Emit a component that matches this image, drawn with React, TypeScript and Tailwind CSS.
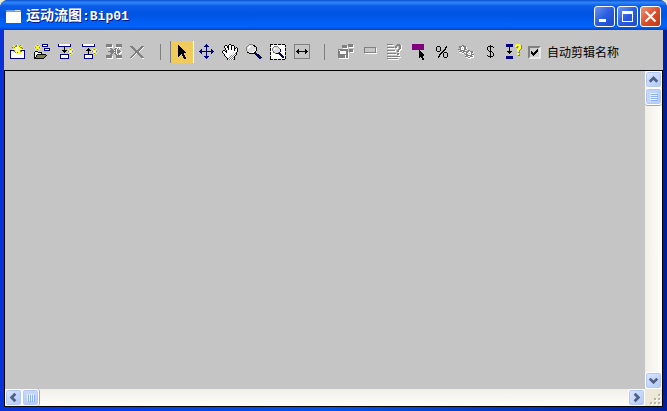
import { useState } from 'react';

// one character per pixel, '.' is transparent
const COLORS: Record<string, string> = {
  k: '#000000',
  w: '#ffffff',
  n: '#000080',
  y: '#ffff20',
  l: '#ffffa0',
  o: '#808040',
  g: '#808080',
  s: '#dcdcdc',
  p: '#800080',
};

const ICONS: Record<string, string[]> = {
  create: [
    '.......y........',
    '...y..oy..o.y...',
    '....yogyyoyy....',
    '..o.oylwlygo....',
    '....ylwylwy.o...',
    '..yyylwlylyyyy..',
    'nnnngylwlyonnnn.',
    'nww.oywylwgowwn.',
    'nwwywoyoywywwwn.',
    'nwwwwwwywwwwwwn.',
    'nwwwwwwwwwwwwwn.',
    'nwwwwwwwwwwwwwn.',
    'nwwwwwwwwwwwwwn.',
    'nwwwwwwwwwwwwwn.',
    'nnnnnnnnnnnnnnn.',
    '................',
  ],
  createMany: [
    '...y....nnnnnn..',
    '.y.o.y..nwwwwn..',
    '..yly...nnnnnn..',
    'yoylyoy.........',
    '..yly.....nnnnnn',
    '.y.o.y....nwwwwn',
    '...y......nnnnnn',
    '.kkk............',
    'kwwwkkkk........',
    'kwwwwwwk........',
    'kwwkkkkkkkkk....',
    'kwkoooooooook...',
    'kwkooooooook....',
    'kkooooooook.....',
    'kkkkkkkkkk......',
    '................',
  ],
  transitionTo: [
    'nwwwwwwwwwwwn...',
    'nwwwwwwwwwwwn...',
    'nnnnnnnnnnnnn...',
    '......k.........',
    '......k.....y...',
    '......k...y.o.y.',
    '....kkkkk..yly..',
    '.....kkk.yoylyoy',
    '......k....yly..',
    '..........y.o.y.',
    '..nnnnnnnnn.y...',
    '..nwwwwwwwn.....',
    '..nwwwwwwwn.....',
    '..nwwwwwwwn.....',
    '..nnnnnnnnn.....',
    '................',
  ],
  transitionFrom: [
    'nwwwwwwwwwwwn...',
    'nwwwwwwwwwwwn...',
    'nnnnnnnnnnnnn...',
    '................',
    '......k.....y...',
    '.....kkk..y.o.y.',
    '....kkkkk..yly..',
    '......k..yoylyoy',
    '......k....yly..',
    '......k...y.o.y.',
    '..nnnnnnnnn.y...',
    '..nwwwwwwwn.....',
    '..nwwwwwwwn.....',
    '..nwwwwwwwn.....',
    '..nnnnnnnnn.....',
    '................',
  ],
  optimize: [
    'gggggg....gggggg',
    'ggggggw...gggggg',
    'ggggggw...gggggg',
    '.wwwwww..wwwwww.',
    '....gg...ggwgw..',
    '.....gg.ggwg....',
    '....ggggwgwggg..',
    '..ggggggggwggggw',
    '....ggggwgwgggww',
    '.....gg.ggwg.ww.',
    '....gg...ggwgw..',
    'gggggg....gggggg',
    'ggggggw...gggggg',
    'ggggggw...gggggg',
    '.wwwwww....wwwww',
    '................',
  ],
  remove: [
    '................',
    '................',
    'ggg........ggg..',
    '.ggg......gggw..',
    '..ggg....gggw...',
    '...ggg..gggw....',
    '....ggggggw.....',
    '.....ggggw......',
    '.....gggg.......',
    '....ggwggg......',
    '...ggw..ggg.....',
    '..ggw....ggg....',
    '.ggw......ggg...',
    'ggw........ggg..',
    '.w..........ww..',
    '................',
  ],
  select: [
    '................',
    '....k...........',
    '....kk..........',
    '....kkk.........',
    '....kkkk........',
    '....kkkkk.......',
    '....kkkkkk......',
    '....kkkkkkk.....',
    '....kkkkkkkk....',
    '....kkkkkk......',
    '....kkk.kk......',
    '....kk..kkk.....',
    '....k....kk.....',
    '.........kkk....',
    '..........kk....',
    '................',
  ],
  move: [
    '........n.......',
    '.......nnn......',
    '......nnnnn.....',
    '........n.......',
    '........n.......',
    '...n....n....n..',
    '..nn....n....nn.',
    '.nnnnnnnnnnnnnnn',
    '..nn....n....nn.',
    '...n....n....n..',
    '........n.......',
    '........n.......',
    '......nnnnn.....',
    '.......nnn......',
    '........n.......',
    '................',
  ],
  pan: [
    '.......kk.......',
    '...kk.kwwkkk....',
    '..kwwkkwwkwwk...',
    '..kwwkkwwkwwk.k.',
    '...kwwkwwkwwkkwk',
    '...kwwkwwkwwkwwk',
    '.kk.kwwwwwwwkwwk',
    'kwwkkwwwwwwwwwwk',
    'kwwwkwwwwwwswsk.',
    '.kwwwwwwswswwgk.',
    '..kwwwwwswswgwk.',
    '..kwwwwswgwgwk..',
    '...kwwwwgwgwk...',
    '....kwwgwgwgk...',
    '.....kgwgwgwk...',
    '.....kwgwgwgk...',
  ],
  zoom: [
    '...gggg.........',
    '..gsssskk.......',
    '.gswwssskk......',
    'gswwssssssk.....',
    'gswsssssssk.....',
    'gsssssssswk.....',
    'gsssssssswk.....',
    '.gssssswwk......',
    '.kksswwwkk......',
    '...kkkkkknk.....',
    '.........nnnk...',
    '..........nnnk..',
    '...........nnnk.',
    '............nnnk',
    '.............nn.',
    '................',
  ],
  zoomRegion: [
    'kkk.kkk.kkk.kkk.',
    'kwwwwwwwwwwwwwwk',
    'kwwwggggwwwwwwwk',
    '.wwgssssgwwwwww.',
    'kwgswwsssgwwwwwk',
    'kwgswsssssnwwwwk',
    'kwgsssssssnwwwwk',
    '.wwgssssssnwwww.',
    'kwwggsssgnwwwwwk',
    'kwwwwgnnnnnwwwwk',
    'kwwwwwwwwnnnwwwk',
    '.wwwwwwwwwnnnww.',
    'kwwwwwwwwwwnnnwk',
    'kwwwwwwwwwwwnnwk',
    'kwwwwwwwwwwwwwwk',
    'kkk.kkk.kkk.kkk.',
  ],
  fit: [
    'gggggggggggggggg',
    'g..............g',
    'g..............g',
    'g..............g',
    'g..............g',
    'g...k......k...g',
    'g..kk......kk..g',
    'g.kknnnnnnnnkk.g',
    'g..kk......kk..g',
    'g...k......k...g',
    'g..............g',
    'g..............g',
    'g..............g',
    'g..............g',
    'gggggggggggggggg',
    '................',
  ],
  save: [
    '..........ggggg.',
    '....ggggg.gggggw',
    '....gggggwgggggw',
    '....gggggw.wwwww',
    '.....wwwww......',
    'gggggggggg.gggg.',
    'gwgggggggg.ggggw',
    'ggwwwwwwgg.ggggw',
    'ggwwwwwwggw.wwww',
    'ggwwwwwwggw.....',
    'ggggggggggw.....',
    'gggggggwggw.....',
    'gggggggwggw.....',
    'gggggggwggw.....',
    '.wwwwwwwwww.....',
    '................',
  ],
  clip: [
    '................',
    '................',
    '................',
    '..gggggggggggg..',
    '..g..........gw.',
    '..g..........gw.',
    '..g..........gw.',
    '..g..........gw.',
    '..gggggggggggg..',
    '...wwwwwwwwwwww.',
    '................',
    '................',
    '................',
    '................',
    '................',
    '................',
  ],
  help: [
    '.gggggg....ggg..',
    '..wwwwww..gggggw',
    '.........gg..ggw',
    '.ggggggg.ggw.ggw',
    '..wwwwwww.ww.ggw',
    '............ggww',
    '.ggggggggw.ggww.',
    '..wwwwwwww.ggw..',
    '............ww..',
    '.ggggggggg.gg...',
    '..wwwwwwwwwggw..',
    '............ww..',
    '.ggggggggggggg..',
    '..wwwwwwwwwwwww.',
    '.ggggggggggg....',
    '..wwwwwwwwwww...',
  ],
  clipMode: [
    '..pppppppppppp..',
    '..pppppppppppp..',
    '..pppppppppppp..',
    '..pppppppppppp..',
    '..pppppppppppp..',
    '..pppppppppppp..',
    '.........k......',
    '.........kk.....',
    '.........kkk....',
    '.........kkkk...',
    '.........kkkkk..',
    '.........kkkkk..',
    '.........kkkk...',
    '.........k.kk...',
    '............kk..',
    '............kk..',
  ],
  percent: [
    '................',
    '................',
    '...kkk......k...',
    '..k...k....kk...',
    '..k...k....k....',
    '..k...k...kk....',
    '..k...k..kk.....',
    '...kkk..kk......',
    '.......kk.kkk...',
    '......kk.k...k..',
    '.....kk..k...k..',
    '.....k...k...k..',
    '....kk...k...k..',
    '....k.....kkk...',
    '................',
    '................',
  ],
  gears: [
    '................',
    '....gg..........',
    '.gggwggg........',
    '.ggwwwggw.......',
    '..gw.wggw.......',
    'gggwwwgggw......',
    '.wgggggww.gg....',
    '.gggwggggggwggg.',
    '.wwwggwwggwwwggw',
    '....wwg.gw..wgw.',
    '.......gggwwwggg',
    '.......wggggggww',
    '.......gggwwgggw',
    '........wwggwwww',
    '..........www...',
    '................',
  ],
  dollar: [
    '................',
    '........k.......',
    '......kkkkk.....',
    '.....k..k..k....',
    '.....k..k.......',
    '.....k..k.......',
    '......k.k.......',
    '.......kkk......',
    '........k.k.....',
    '........k..k....',
    '........k..k....',
    '.....k..k..k....',
    '......kkkkk.....',
    '........k.......',
    '................',
    '................',
  ],
  track: [
    'nnnnnnn...yyyy..',
    'nnnnnnn..yyyyyyg',
    'nnnnnnn..yyg.yyg',
    '...k......gg.yyg',
    '...k........yyyg',
    '...k.......yyyg.',
    '...k.......yyg..',
    '.kkkkk.....yyg..',
    '..kkk.......gg..',
    '...k.......yy...',
    '...........yyg..',
    '............gg..',
    'nnnnnnn.........',
    'nnnnnnn.........',
    'nnnnnnn.........',
    '................',
  ],
};

const Icon = ({ name }: { name: string }) => (
  <svg width="16" height="16" viewBox="0 0 16 16" shapeRendering="crispEdges" aria-hidden="true">
    {ICONS[name].map((row, y) =>
      row.split('').map((c, x) =>
        c === '.' ? null : <rect key={`${x}-${y}`} x={x} y={y} width="1" height="1" fill={COLORS[c]} />
      )
    )}
  </svg>
);

interface Tool {
  icon: string;
  label: string;
}

const editTools: Tool[] = [
  { icon: 'create', label: '创建剪辑' },
  { icon: 'createMany', label: '创建多个剪辑' },
  { icon: 'transitionTo', label: '创建到选定项的变换' },
  { icon: 'transitionFrom', label: '创建来自选定项的变换' },
  { icon: 'optimize', label: '优化选定变换' },
  { icon: 'remove', label: '删除' },
];

const viewTools: Tool[] = [
  { icon: 'select', label: '选择' },
  { icon: 'move', label: '移动剪辑' },
  { icon: 'pan', label: '平移' },
  { icon: 'zoom', label: '缩放' },
  { icon: 'zoomRegion', label: '缩放区域' },
  { icon: 'fit', label: '最大化显示' },
];

const clipTools: Tool[] = [
  { icon: 'save', label: '保存' },
  { icon: 'clip', label: '剪辑' },
  { icon: 'help', label: '检查' },
  { icon: 'clipMode', label: '剪辑模式' },
  { icon: 'percent', label: '随机百分比' },
  { icon: 'gears', label: '设置' },
  { icon: 'dollar', label: '成本' },
  { icon: 'track', label: '显示变换' },
];

const Separator = () => (
  <div className="flex h-6 w-5 items-center pl-2.5">
    <div className="h-4 w-px bg-[#808080]" />
  </div>
);

const ToolButton = ({ tool, active, onClick }: { tool: Tool; active?: boolean; onClick?: () => void }) => (
  <button
    type="button"
    aria-label={tool.label}
    aria-pressed={active}
    onClick={onClick}
    className={`flex h-[22px] w-6 items-center justify-center ${
      active ? 'border-l border-r border-l-[#808080] border-r-white bg-[#f0cb5c]' : ''
    }`}
  >
    <Icon name={tool.icon} />
  </button>
);

const arrows = {
  up: 'M4 10.5 8 6.5 12 10.5',
  down: 'M4 6 8 10 12 6',
  left: 'M10 4 6 8 10 12',
  right: 'M6 4 10 8 6 12',
};

const ScrollButton = ({ dir, label }: { dir: keyof typeof arrows; label: string }) => (
  <button
    type="button"
    aria-label={label}
    className="flex h-[17px] w-[17px] shrink-0 items-center justify-center rounded-[3px] border border-white bg-linear-to-br from-[#dce6ff] to-[#b2c8f8] shadow-[inset_0_0_0_1px_#b4c8f6]"
  >
    <svg width="15" height="15" viewBox="0 0 16 16" fill="none" stroke="#4d6185" strokeWidth="3">
      <path d={arrows[dir]} />
    </svg>
  </button>
);

const FlowCanvas = () => (
  <div className="grid min-h-0 flex-1 grid-cols-[1fr_17px] grid-rows-[1fr_17px] border border-black bg-[#c5c5c5]">
    <main className="min-h-0" />
    <div className="flex flex-col justify-between bg-linear-to-r from-[#f0efe8] to-[#fefefb]">
      <div>
        <ScrollButton dir="up" label="向上滚动" />
        <div className="flex h-[17px] w-[17px] flex-col items-center justify-center gap-px rounded-[3px] border border-white bg-linear-to-r from-[#c9d8fc] to-[#b8cbf9] shadow-[inset_0_0_0_1px_#b4c8f6,0_1px_0_#91a9dc]">
          {[0, 1, 2, 3].map((i) => (
            <div key={i} className="h-px w-[7px] bg-[#eef4fe] shadow-[1px_1px_0_#8cb0f8]" />
          ))}
        </div>
      </div>
      <ScrollButton dir="down" label="向下滚动" />
    </div>
    <div className="flex justify-between bg-linear-to-b from-[#f0efe8] to-[#fefefb]">
      <div className="flex">
        <ScrollButton dir="left" label="向左滚动" />
        <div className="flex h-[17px] w-[17px] items-center justify-center gap-px rounded-[3px] border border-white bg-linear-to-b from-[#c9d8fc] to-[#b8cbf9] shadow-[inset_0_0_0_1px_#b4c8f6,1px_0_0_#91a9dc]">
          {[0, 1, 2, 3].map((i) => (
            <div key={i} className="h-[7px] w-px bg-[#eef4fe] shadow-[1px_1px_0_#8cb0f8]" />
          ))}
        </div>
      </div>
      <ScrollButton dir="right" label="向右滚动" />
    </div>
    <div className="flex items-end justify-end bg-[#ece9d8]">
      <svg width="14" height="14" viewBox="0 0 14 14" shapeRendering="crispEdges" aria-hidden="true">
        {[[10, 2], [6, 6], [10, 6], [2, 10], [6, 10], [10, 10]].map(([x, y]) => (
          <g key={`${x}-${y}`}>
            <rect x={x + 1} y={y + 1} width="2" height="2" fill="#ffffff" />
            <rect x={x} y={y} width="2" height="2" fill="#b8b4a2" />
          </g>
        ))}
      </svg>
    </div>
  </div>
);

const App = () => {
  const [activeTool, setActiveTool] = useState('select');
  const [autoName, setAutoName] = useState(true);

  return (
    <div className="h-screen bg-[#ece9c8]">
      <div className="flex h-full flex-col overflow-hidden rounded-t-lg bg-linear-to-r from-[#0831d9] via-[#0054e8] to-[#001ea0]">
        <header className="flex h-[30px] shrink-0 items-center justify-between bg-[linear-gradient(to_bottom,#0a4fd0_0%,#2f86fa_8%,#0a5ce8_20%,#0054e3_50%,#0060f6_75%,#0062fa_88%,#0046c8_100%)] pt-[3px] pr-1.5 pl-1.5">
          <div className="flex items-center gap-[5px]">
            <svg width="15" height="13" viewBox="0 0 15 13" shapeRendering="crispEdges" aria-hidden="true">
              <rect width="15" height="13" fill="#fdfdfa" />
              <rect width="15" height="2" fill="#6aa0f4" />
              <rect x="9" y="0" width="5" height="1" fill="#d8e6fc" />
            </svg>
            <h1 className="flex items-baseline pb-0.5 font-['Noto_Sans_CJK_SC',sans-serif] text-[14px] leading-5 font-bold text-white [text-shadow:1px_1px_0_#0a1883]">
              运动流图
              <span className="font-['Liberation_Mono',monospace] text-[13px]">:Bip01</span>
            </h1>
          </div>
          <div className="flex gap-0.5">
            <button
              type="button"
              aria-label="最小化"
              className="h-[21px] w-[21px] rounded-[3px] border border-white bg-linear-to-br from-[#6c94f0] via-[#2a5ce0] to-[#1c4ccc]"
            >
              <svg width="19" height="19" viewBox="0 0 19 19" shapeRendering="crispEdges">
                <rect x="4" y="12" width="7" height="3" fill="#fff" />
              </svg>
            </button>
            <button
              type="button"
              aria-label="最大化"
              className="h-[21px] w-[21px] rounded-[3px] border border-white bg-linear-to-br from-[#6c94f0] via-[#2a5ce0] to-[#1c4ccc]"
            >
              <svg width="19" height="19" viewBox="0 0 19 19" shapeRendering="crispEdges">
                <path d="M4 4h11v11H4zM5 7v7h9V7z" fill="#fff" fillRule="evenodd" />
              </svg>
            </button>
            <button
              type="button"
              aria-label="关闭"
              className="h-[21px] w-[21px] rounded-[3px] border border-white bg-linear-to-br from-[#ee9478] via-[#dc4e2a] to-[#c03a14]"
            >
              <svg width="19" height="19" viewBox="0 0 19 19" stroke="#fff" strokeWidth="2.2">
                <path d="M4.5 4.5 14.5 14.5M14.5 4.5 4.5 14.5" />
              </svg>
            </button>
          </div>
        </header>

        <div className="flex min-h-0 flex-1 flex-col px-1 pb-1">
          <div className="flex h-10 shrink-0 items-center bg-[#c5c5c5] pt-1 pl-0.5">
            {editTools.map((tool) => (
              <ToolButton key={tool.icon} tool={tool} />
            ))}
            <Separator />
            {viewTools.map((tool) => (
              <ToolButton
                key={tool.icon}
                tool={tool}
                active={activeTool === tool.icon}
                onClick={() => setActiveTool(tool.icon)}
              />
            ))}
            <Separator />
            {clipTools.map((tool) => (
              <ToolButton key={tool.icon} tool={tool} />
            ))}
            <label className="flex items-center gap-1.5 pl-0.5 font-['Noto_Sans_CJK_SC',sans-serif] text-xs text-black">
              <span className="grid h-[13px] w-[13px]">
                <input
                  type="checkbox"
                  checked={autoName}
                  onChange={(e) => setAutoName(e.target.checked)}
                  className="peer col-start-1 row-start-1 h-[13px] w-[13px] appearance-none border-2 border-t-[#808080] border-r-[#e8e8e8] border-b-[#e8e8e8] border-l-[#808080] bg-[#cfcfcf]"
                />
                <svg
                  className="pointer-events-none invisible col-start-1 row-start-1 peer-checked:visible"
                  width="13"
                  height="13"
                  viewBox="0 0 13 13"
                  shapeRendering="crispEdges"
                >
                  <path d="M3 5h1v1h1v1h1V6h1V5h1V4h1V3h1v3H9v1H8v1H7v1H6v1H5V9H4V8H3z" fill="#000" />
                </svg>
              </span>
              自动剪辑名称
            </label>
          </div>
          <FlowCanvas />
        </div>
      </div>
    </div>
  );
};

export default App;
